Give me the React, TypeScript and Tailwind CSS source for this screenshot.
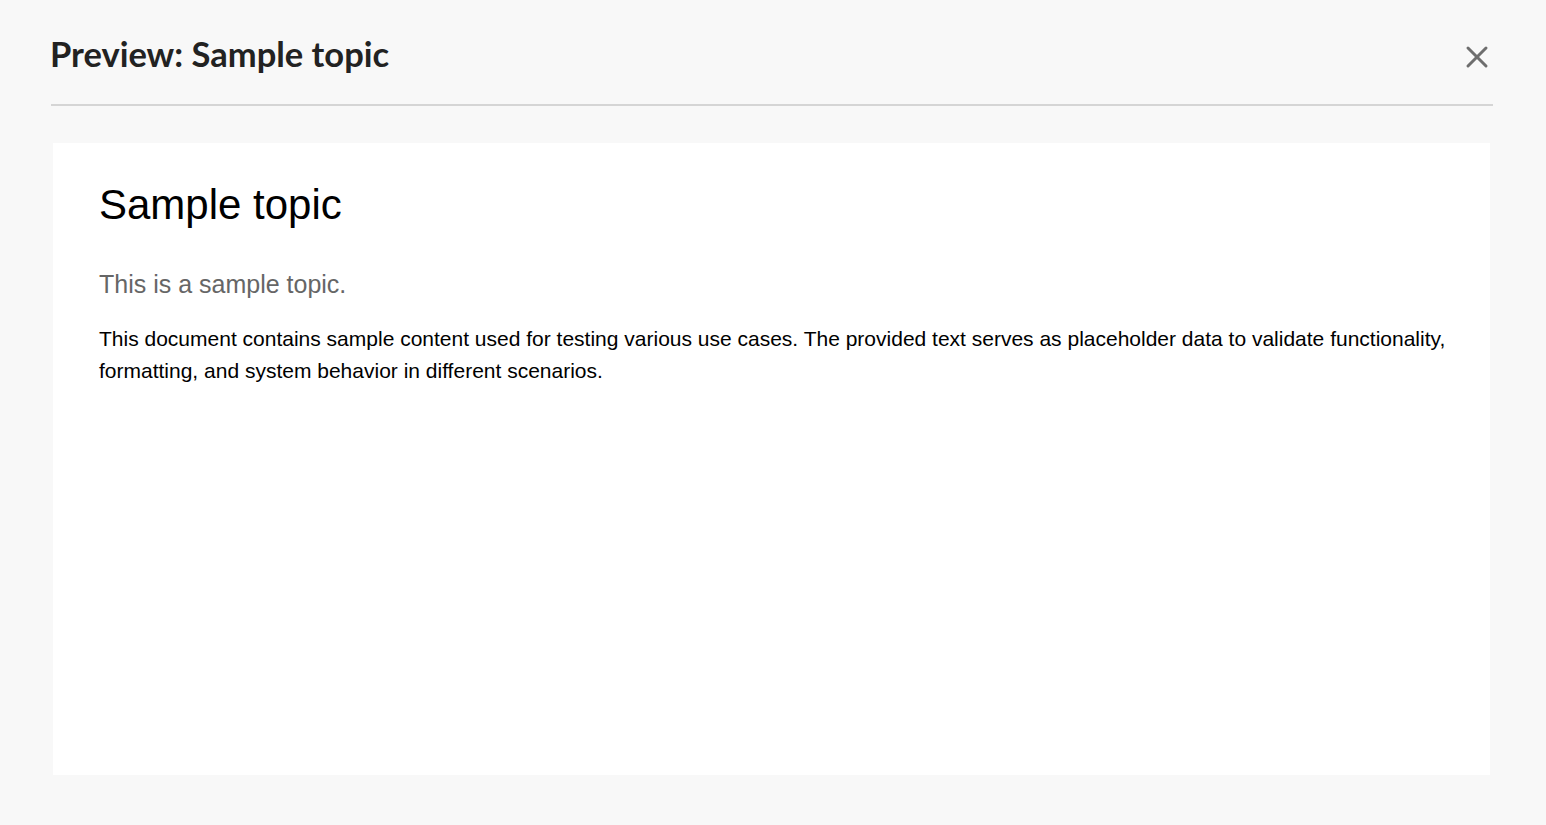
import { X } from 'lucide-react'

export default function App() {
  return (
    <div className="w-[1546px] h-[825px] bg-[#f8f8f8] overflow-hidden">
      <div className="ml-[51px] mr-[53px] flex flex-col">
        <div className="h-[106px] flex items-center justify-between border-b-2 border-[#d5d5d5]">
          <h1 className="mt-[5px] -ml-[1px] text-[34.5px] font-bold text-[#222] leading-none" style={{ fontFamily: 'Lato, sans-serif' }}>
            Preview: Sample topic
          </h1>
          <button className="-mr-[2px] mt-[10px] text-[#6e6e6e]">
            <X size={36} strokeWidth={2} />
          </button>
        </div>
        <div className="mt-[37px] ml-[2px] mr-[3px] h-[632px] bg-white pl-[46px] pr-[36px] pt-[38px]" style={{ fontFamily: '"Liberation Sans", Arial, sans-serif' }}>
          <h2 className="text-[42px] leading-[48px] text-black">Sample topic</h2>
          <p className="mt-[40px] text-[25px] leading-[30px] text-[#666]">This is a sample topic.</p>
          <p className="mt-[24px] text-[21px] leading-[32px] text-black">
            This document contains sample content used for testing various use cases. The provided text serves as placeholder data to validate functionality, formatting, and system behavior in different scenarios.
          </p>
        </div>
      </div>
    </div>
  )
}
